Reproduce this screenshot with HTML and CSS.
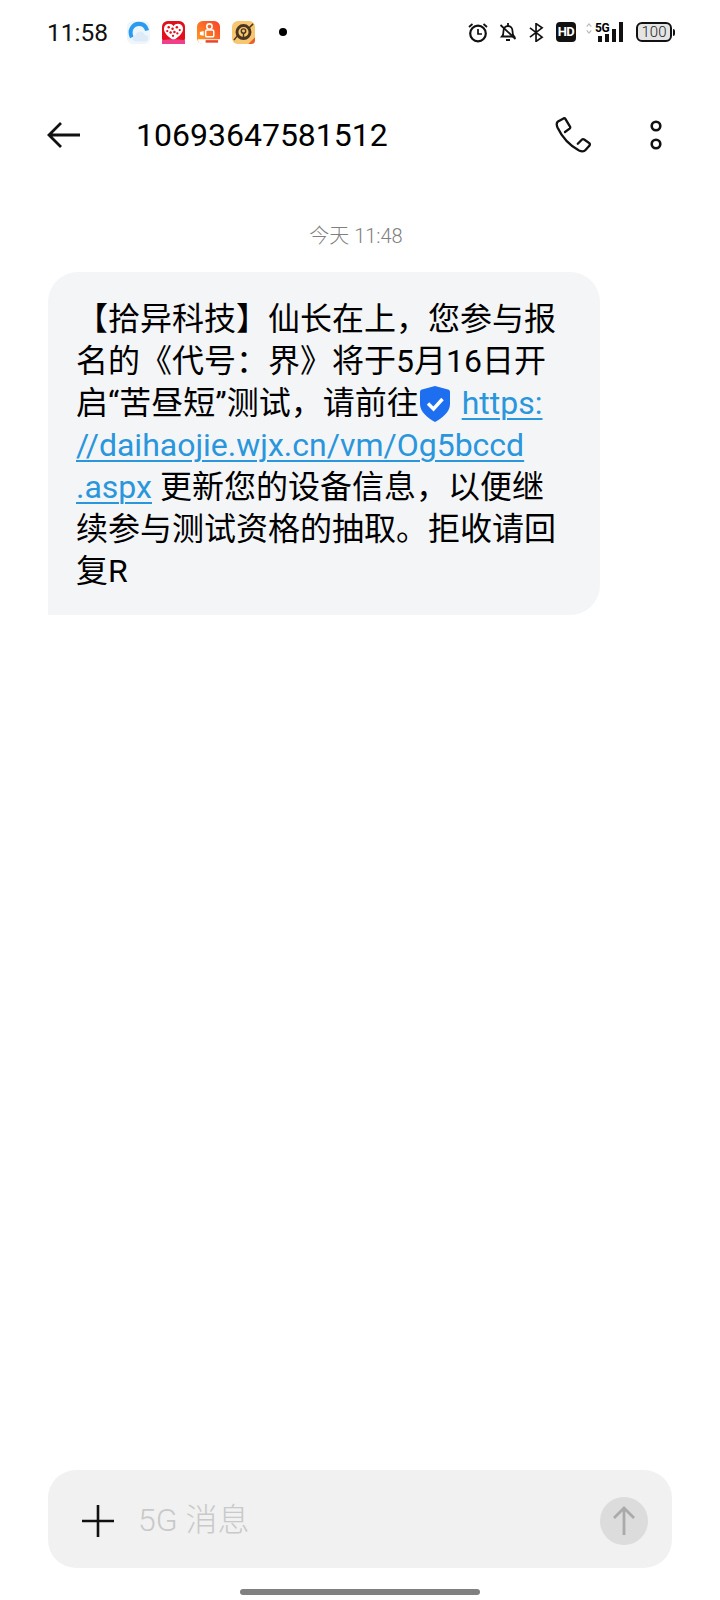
FILE: index.html
```html
<!DOCTYPE html>
<html lang="zh-Hans">
<head>
<meta charset="utf-8">
<title>短信</title>
<link rel="stylesheet" href="styles.css">
</head>
<body>
<div class="screen">
  <div class="status">
    <span class="time">11:58</span>
    <div class="apps">
      <svg class="app" viewBox="0 0 24 24"><rect width="24" height="24" rx="6" fill="#eef5fb"/><path d="M5 17C1.500 10 6 3 12.500 3 17 3 20 6 21 10" fill="none" stroke="#2a9bf0" stroke-width="4.200"/><path d="M8.500 21c-3.500 0-4-5 0-5.500 1-5 8-6 10-1 4.500 0 5 6.500 .5 6.500z" fill="#dcebf7"/></svg>
      <svg class="app" viewBox="0 0 24 24"><rect width="24" height="24" rx="6" fill="#e2101c"/><path d="M12 20C4 15 1.500 11 2.200 7 3 2.500 9.500 1.500 12 5.500 14.500 1.500 21 2.500 21.800 7 22.500 11 20 15 12 20z" fill="#fff"/><g fill="#e2101c"><circle cx="7" cy="6.500" r="1.300"/><circle cx="11" cy="8" r="1.300"/><circle cx="15.500" cy="6.500" r="1.300"/><circle cx="18.500" cy="9.500" r="1.200"/><circle cx="5.500" cy="10.500" r="1.200"/><circle cx="9" cy="12" r="1.300"/><circle cx="13" cy="11.500" r="1.300"/><circle cx="16" cy="13" r="1.200"/><circle cx="11.500" cy="15.500" r="1.200"/></g><path d="M0 20q12-2 24 0v-1 5H0z" fill="#f0408c"/></svg>
      <svg class="app" viewBox="0 0 24 24"><defs><linearGradient id="ks" x1="0" y1="1" x2="1" y2="0"><stop offset="0" stop-color="#ffa01e"/><stop offset="1" stop-color="#f8402c"/></linearGradient></defs><rect width="24" height="24" rx="6" fill="url(#ks)"/><circle cx="13" cy="5.800" r="2.800" fill="none" stroke="#fff" stroke-width="1.600"/><rect x="9" y="9.500" width="8.500" height="7" rx="1.500" fill="none" stroke="#fff" stroke-width="1.600"/><path d="M3 11.500l4-1v5l-4-1z" fill="#fff"/><path d="M1 19h23v5H6q-5 0-5-5z" fill="#fff"/><rect x="9" y="20" width="13" height="2.600" fill="#e8452c"/></svg>
      <svg class="app" viewBox="0 0 24 24"><rect width="24" height="24" rx="6" fill="#f7c670"/><circle cx="12" cy="11.500" r="6.800" fill="none" stroke="#4a3520" stroke-width="3"/><circle cx="12" cy="10.500" r="2.300" fill="none" stroke="#4a3520" stroke-width="1.500"/><path d="M12 12.500v5M2 20L6 15M18 7L22 3" stroke="#4a3520" stroke-width="1.500"/><path d="M17 24l7-7v3q0 4-4 4z" fill="#e8602c"/></svg>
    </div>
    <span class="dot"></span>
    <div class="sys">
      <svg class="sys-clock" viewBox="0 0 20 20"><circle cx="10" cy="11" r="7.800" fill="none" stroke="#111" stroke-width="2.200"/><path d="M10 6.500V11.500H14" fill="none" stroke="#111" stroke-width="1.700"/><path d="M1 4.500L4.500 1.500M19 4.500L15.500 1.500" stroke="#111" stroke-width="1.800"/></svg>
      <svg class="sys-bell" viewBox="0 0 18 20"><path d="M3 14.500c1.500-1.500 1.500-3 1.500-5.500 0-3 2-5 4.500-5s4.500 2 4.500 5c0 2.500 0 4 1.500 5.500z" fill="none" stroke="#111" stroke-width="1.800"/><path d="M9 1v3M7 18h4M1.500 3l15 14" stroke="#111" stroke-width="1.800"/></svg>
      <svg class="sys-bt" viewBox="0 0 16 20"><path d="M1 5l13 10-6.500 4.500V.5L14 5 1 15" fill="none" stroke="#111" stroke-width="1.800"/></svg>
      <span class="hd">HD</span>
      <div class="net">
        <svg class="net-arrows" viewBox="0 0 6 12"><path d="M.5 4L3 1l2.500 3M.5 8L3 11l2.500-3" fill="none" stroke="#bbb" stroke-width="1.300"/></svg>
        <span class="fiveg">5G</span>
        <div class="bars"><i class="b1"></i><i class="b2"></i><i class="b3"></i><i class="b4"></i></div>
      </div>
      <div class="batt"><span class="batt-body">100</span><span class="batt-nub"></span></div>
    </div>
  </div>

  <header class="head">
    <svg class="back" viewBox="0 0 34 28"><path d="M33 14H2M14 2L2 14l12 12" fill="none" stroke="#111" stroke-width="2.800"/></svg>
    <h1 class="num">10693647581512</h1>
    <svg class="phone" viewBox="0 0 36 36"><path d="M8.500 1.500L3 4.500C1 5.800 1.500 8 2.500 10.500 7 20 14 28 24 33.500c2.500 1 5 1.200 6.500-.5l4-4.500c.5-.8.300-1.800-.3-2.400l-5-3.600c-.8-.5-1.700-.5-2.400.2l-4 4M8.500 1.500c.8-.4 1.600-.1 2 .6l4.500 7.500c.4.800.2 1.600-.4 2.100L10 15" fill="none" stroke="#111" stroke-width="2.300" stroke-linecap="round"/></svg>
    <svg class="more" viewBox="0 0 14 30"><circle cx="7" cy="6" r="4.300" fill="none" stroke="#111" stroke-width="2.600"/><circle cx="7" cy="24" r="4.300" fill="none" stroke="#111" stroke-width="2.600"/></svg>
  </header>

  <main class="thread">
    <div class="date">今天 11:48</div>
    <div class="bubble">【拾异科技】仙长在上&#xFF0C;您参与报<br>名的《代号&#xFF1A;界》将于5月16日开<br>启“苦昼短”测试&#xFF0C;请前往<svg class="shield" viewBox="0 0 30 36"><path d="M15 0l13 3.500c1 .3 2 1 2 2.500v12c0 8-8 14-15 18C8 32 0 26 0 18V6c0-1.500 1-2.200 2-2.500z" fill="#1e6ef0"/><path d="M8 17.500l5.500 5.500L22.500 13" fill="none" stroke="#fff" stroke-width="3.400"/></svg> <a class="link" href="#">https:<br>//daihaojie.wjx.cn/vm/Og5bccd<br>.aspx</a> 更新您的设备信息&#xFF0C;以便继<br>续参与测试资格的抽取。拒收请回<br>复R</div>
  </main>

  <footer class="composer">
    <svg class="plus" viewBox="0 0 32 32"><path d="M16 0v32M0 16h32" stroke="#111" stroke-width="2.600"/></svg>
    <span class="ph">5G 消息</span>
    <span class="send"><svg class="send-arrow" viewBox="0 0 24 32"><path d="M12 30V3M2 13L12 3l10 10" fill="none" stroke="#aaa" stroke-width="2.800"/></svg></span>
  </footer>
  <div class="home"></div>
</div>
</body>
</html>
```

FILE: styles.css
```css
* { box-sizing: border-box; }
html, body { margin: 0; padding: 0; background: #fff; }
body { font-family: Roboto, "Noto Sans CJK SC", sans-serif; color: #000; }
.screen { width: 720px; height: 1600px; display: flex; flex-direction: column; overflow: hidden; }

.status { height: 64px; display: flex; align-items: center; padding-left: 47px; }
.time { font-size: 24.5px; width: 80px; color: #111; }
.apps { display: flex; gap: 12px; }
.app { width: 23px; height: 23px; display: block; }
.dot { width: 8px; height: 8px; border-radius: 50%; background: #000; margin-left: 24px; }
.sys { display: flex; align-items: center; margin-left: auto; margin-right: 45px; height: 22px; }
.sys-clock { width: 20px; height: 21px; margin-right: 11px; }
.sys-bell { width: 18px; height: 20px; margin-right: 12px; }
.sys-bt { width: 15px; height: 19px; margin-right: 12px; }
.hd { width: 20px; height: 20px; border-radius: 4px; background: #111; color: #fff; font-size: 13px; font-weight: 700; line-height: 20px; text-align: center; letter-spacing: -.5px; margin-right: 10px; }
.net { display: flex; align-items: flex-start; height: 20px; position: relative; width: 38px; margin-right: 12px; }
.net-arrows { width: 6px; height: 11px; margin-top: 1px; }
.fiveg { font-size: 12px; font-weight: 700; line-height: 12px; letter-spacing: -.4px; margin-left: 3px; }
.bars { position: absolute; left: 12px; bottom: 0; display: flex; align-items: flex-end; gap: 3px; }
.bars i { display: block; width: 4px; background: #111; }
.b1 { height: 6px; }
.b2 { height: 8px; }
.b3 { height: 13px; }
.b4 { height: 20px; }
.batt { display: flex; align-items: center; }
.batt-body { width: 36px; height: 20px; border: 2px solid #111; border-radius: 6px; background: #e4e4e4; font-size: 15px; font-weight: 300; line-height: 16px; text-align: center; color: #222; }
.batt-nub { width: 2px; height: 7px; background: #111; border-radius: 0 2px 2px 0; margin-left: 1px; }

.head { height: 142px; display: flex; align-items: center; padding-left: 47px; }
.back { width: 34px; height: 28px; }
.num { margin: 0 0 0 55px; font-size: 32px; font-weight: 400; line-height: 40px; color: #000; flex: 1; }
.phone { width: 36px; height: 36px; margin-right: 58px; }
.more { width: 14px; height: 30px; margin-right: 57px; }

.thread { flex: 1; padding-top: 15px; }
.date { height: 30px; line-height: 30px; text-align: center; font-size: 20px; color: #808080; font-weight: 300; margin-left: -8px; margin-bottom: 21px; }
.bubble { margin-left: 48px; width: 552px; height: 343px; padding: 26px 20px 23px 28px; background: #f4f5f7; border-radius: 30px 30px 30px 0; font-size: 32px; line-height: 42px; color: #000; }
.shield { width: 30px; height: 36px; vertical-align: -2px; margin: -6px 4px -6px 1px; }
.link { color: #2a96dc; text-decoration: underline; text-decoration-thickness: 2px; text-underline-offset: 4px; }

.composer { margin: 0 48px; height: 98px; padding-top: 4px; background: #f1f1f1; border-radius: 28px; display: flex; align-items: center; padding-left: 34px; flex: none; }
.plus { width: 32px; height: 32px; }
.ph { font-size: 32px; color: #c9c9c9; margin-left: 24px; margin-top: -8px; font-weight: 300; }
.send { margin-left: auto; margin-right: 24px; width: 48px; height: 48px; border-radius: 50%; background: #dcdcdc; display: flex; align-items: center; justify-content: center; }
.send-arrow { width: 24px; height: 32px; }
.home { flex: none; width: 240px; height: 6px; border-radius: 3px; background: #808080; margin: 21px auto 5px; }
```
